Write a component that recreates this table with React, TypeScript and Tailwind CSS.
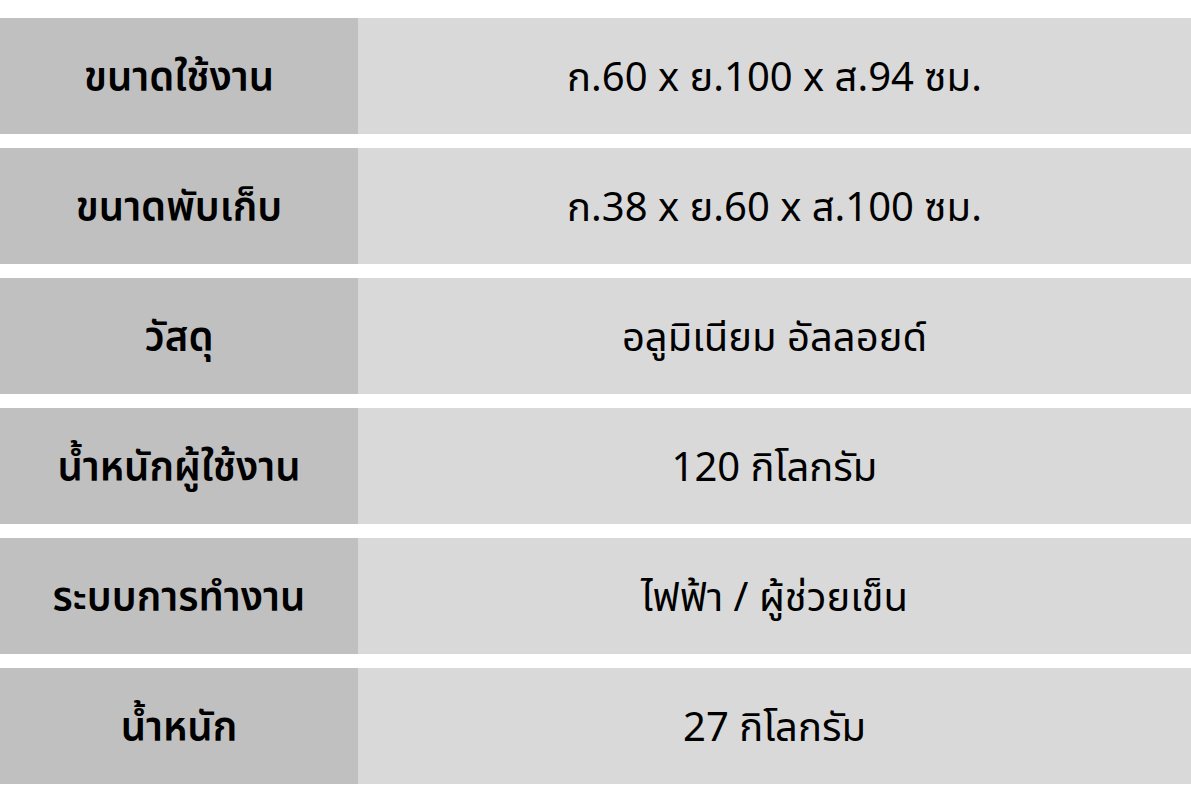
const rows = [
  { label: 'ขนาดใช้งาน', value: 'ก.60 x ย.100 x ส.94 ซม.' },
  { label: 'ขนาดพับเก็บ', value: 'ก.38 x ย.60 x ส.100 ซม.' },
  { label: 'วัสดุ', value: 'อลูมิเนียม อัลลอยด์' },
  { label: 'น้ำหนักผู้ใช้งาน', value: '120 กิโลกรัม' },
  { label: 'ระบบการทำงาน', value: 'ไฟฟ้า / ผู้ช่วยเข็น' },
  { label: 'น้ำหนัก', value: '27 กิโลกรัม' },
];

export default function App() {
  return (
    <div
      className="w-[1191px] h-[800px] bg-white pt-[18px] flex flex-col gap-[14px]"
      style={{ fontFamily: '"Noto Sans Thai", "Noto Sans", "Liberation Sans", sans-serif' }}
    >
      {rows.map((r) => (
        <div key={r.label} className="flex h-[116px]">
          <div className="w-[358px] bg-[#c0c0c0] flex items-center justify-center pt-[6px] text-[40px] font-semibold text-black">
            {r.label}
          </div>
          <div className="flex-1 bg-[#d9d9d9] flex items-center justify-center pt-[6px] text-[40px] text-black">
            {r.value}
          </div>
        </div>
      ))}
    </div>
  );
}
